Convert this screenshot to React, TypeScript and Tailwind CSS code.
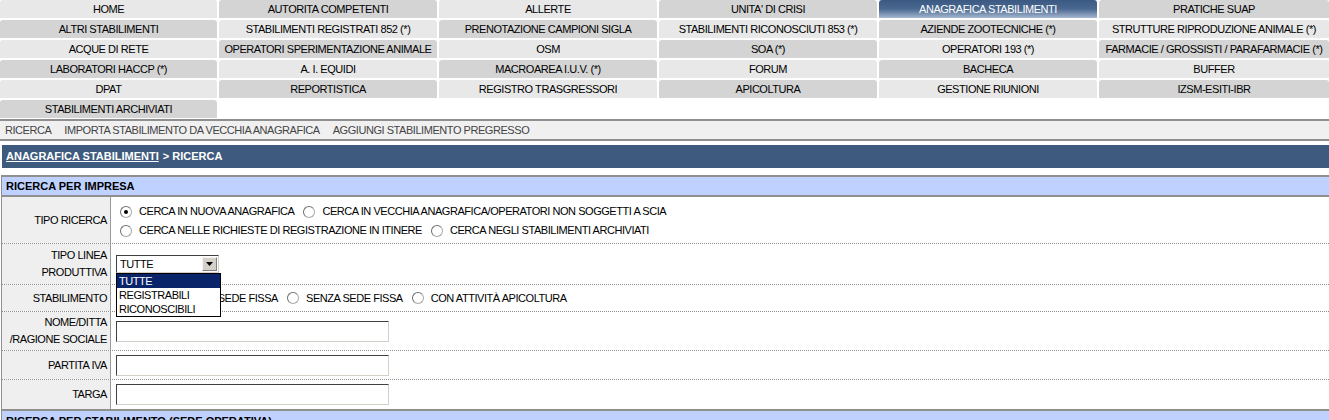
import React from "react";

const menu: string[][] = [
    ["HOME", "AUTORITA COMPETENTI", "ALLERTE", "UNITA' DI CRISI", "ANAGRAFICA STABILIMENTI", "PRATICHE SUAP"],
    ["ALTRI STABILIMENTI", "STABILIMENTI REGISTRATI 852 (*)", "PRENOTAZIONE CAMPIONI SIGLA", "STABILIMENTI RICONOSCIUTI 853 (*)", "AZIENDE ZOOTECNICHE (*)", "STRUTTURE RIPRODUZIONE ANIMALE (*)"],
    ["ACQUE DI RETE", "OPERATORI SPERIMENTAZIONE ANIMALE", "OSM", "SOA (*)", "OPERATORI 193 (*)", "FARMACIE / GROSSISTI / PARAFARMACIE (*)"],
    ["LABORATORI HACCP (*)", "A. I. EQUIDI", "MACROAREA I.U.V. (*)", "FORUM", "BACHECA", "BUFFER"],
    ["DPAT", "REPORTISTICA", "REGISTRO TRASGRESSORI", "APICOLTURA", "GESTIONE RIUNIONI", "IZSM-ESITI-IBR"],
    ["STABILIMENTI ARCHIVIATI"],
];

const font = "font-['Liberation_Sans',Arial,sans-serif] text-[11px] tracking-[-0.45px]";

function Radio({ checked, label, className = "" }: { checked?: boolean; label: string; className?: string }) {
    return (
        <span className={`inline-flex items-center gap-[7px] mr-[9px] ${className}`}>
            <span className="relative inline-flex h-[12px] w-[12px] items-center justify-center rounded-full border border-[#a8a8a8] border-t-[#6e6e6e] border-l-[#6e6e6e] bg-white">
                {checked && <span className="h-[4px] w-[4px] rounded-full bg-black" />}
            </span>
            <span>{label}</span>
        </span>
    );
}

function TextInput() {
    return (
        <div className="h-[21px] w-[273px] border border-[#d4d0c8] border-t-[#404040] border-l-[#404040] bg-white" />
    );
}

function Row({ label, h, children, last }: { label: React.ReactNode; h: string; children?: React.ReactNode; last?: boolean }) {
    return (
        <div className={`flex ${last ? "" : "border-b border-dotted border-[#8c8c8c]"} ${h}`}>
            <div className="flex w-[109px] shrink-0 items-center justify-end bg-[#efefef] border-r border-[#9a9a9a] pr-[3px] text-right leading-[17px]">
                {label}
            </div>
            <div className="flex flex-1 flex-col justify-center pl-[5px]">{children}</div>
        </div>
    );
}

export default function App() {
    return (
        <div className={`w-[1329px] h-[420px] overflow-hidden bg-white text-black ${font}`}>
            {/* top menu */}
            <div className="grid grid-cols-[217px_repeat(4,218px)_1fr] gap-x-[2px] gap-y-[2px]">
                {menu.map((row, r) =>
                    row.map((item, c) => {
                        const active = item === "ANAGRAFICA STABILIMENTI";
                        const light = (r + c) % 2 === 0;
                        return (
                            <div
                                key={item}
                                className={`flex h-[18px] items-center justify-center rounded-t-[3px] whitespace-nowrap ${
                                    active
                                        ? "bg-linear-to-b from-[#3b5a83] via-[#4a6890] to-[#a7b8d0] text-white"
                                        : light
                                        ? "bg-[#e8e8e8]"
                                        : "bg-[#d4d4d4]"
                                }`}
                            >
                                {item}
                            </div>
                        );
                    })
                )}
            </div>

            {/* sub menu */}
            <div className="mt-[1px] flex h-[22px] items-center gap-[13px] border-t-2 border-b-2 border-[#8f8f8f] bg-[#f0f0f0] pl-[5px] text-[#444]">
                <span>RICERCA</span>
                <span>IMPORTA STABILIMENTO DA VECCHIA ANAGRAFICA</span>
                <span>AGGIUNGI STABILIMENTO PREGRESSO</span>
            </div>

            {/* title bar */}
            <div className="ml-[2px] mt-[4px] flex h-[23px] items-center bg-[#3e5a7e] pl-[4px] font-bold tracking-[0px] text-white">
                <span className="underline">ANAGRAFICA STABILIMENTI</span>
                <span className="ml-[4px]">&gt; RICERCA</span>
            </div>

            {/* form */}
            <div className="relative mt-[7px] ml-[1px] border-l border-[#8f8f8f]">
                <div className="flex h-[22px] items-center border-t-2 border-b-2 border-[#8f8f8f] bg-[#bfd1ff] pl-[4px] font-bold tracking-[0px]">
                    RICERCA PER IMPRESA
                </div>

                <Row label="TIPO RICERCA" h="h-[47px]">
                    <div className="mt-[2px] flex h-[19px] items-center pl-[4px]">
                        <Radio checked label="CERCA IN NUOVA ANAGRAFICA" />
                        <Radio label="CERCA IN VECCHIA ANAGRAFICA/OPERATORI NON SOGGETTI A SCIA" />
                    </div>
                    <div className="flex h-[19px] items-center pl-[4px]">
                        <Radio label="CERCA NELLE RICHIESTE DI REGISTRAZIONE IN ITINERE" />
                        <Radio label="CERCA NEGLI STABILIMENTI ARCHIVIATI" />
                    </div>
                </Row>

                <Row label={<span>TIPO LINEA<br />PRODUTTIVA</span>} h="h-[41px]">
                    <div className="relative">
                        <div className="flex h-[18px] w-[103px] items-center border border-[#d4d0c8] border-t-[#404040] border-l-[#404040] bg-white">
                            <span className="flex-1 pl-[3px]">TUTTE</span>
                            <span className="mr-[1px] flex h-[14px] w-[15px] items-center justify-center border border-[#808080] border-t-[#f4f4f4] border-l-[#f4f4f4] bg-[#d4d0c8]">
                                <svg width="7" height="4" viewBox="0 0 7 4">
                                    <path d="M0 0h7L3.5 4z" fill="#000" />
                                </svg>
                            </span>
                        </div>
                        {/* open options list */}
                        <div className="absolute left-0 top-[18px] z-10 w-[105px] border border-black bg-white leading-[14px]">
                            <div className="bg-[#0a246a] pl-[2px] text-white">TUTTE</div>
                            <div className="pl-[2px]">REGISTRABILI</div>
                            <div className="pl-[2px]">RICONOSCIBILI</div>
                        </div>
                    </div>
                </Row>

                <Row label="STABILIMENTO" h="h-[27px]">
                    <div className="flex items-center pl-[4px]">
                        <Radio label="CON SEDE FISSA" className="ml-[53px]" />
                        <Radio label="SENZA SEDE FISSA" />
                        <Radio label="CON ATTIVITÀ APICOLTURA" />
                    </div>
                </Row>

                <Row label={<span>NOME/DITTA<br />/RAGIONE SOCIALE</span>} h="h-[39px]">
                    <TextInput />
                </Row>

                <Row label="PARTITA IVA" h="h-[29px]">
                    <TextInput />
                </Row>

                <Row label="TARGA" h="h-[29px]" last>
                    <TextInput />
                </Row>

                <div className="flex h-[22px] items-center border-t-2 border-[#8f8f8f] bg-[#bfd1ff] pl-[4px] font-bold tracking-[0px]">
                    RICERCA PER STABILIMENTO (SEDE OPERATIVA)
                </div>
            </div>
        </div>
    );
}
